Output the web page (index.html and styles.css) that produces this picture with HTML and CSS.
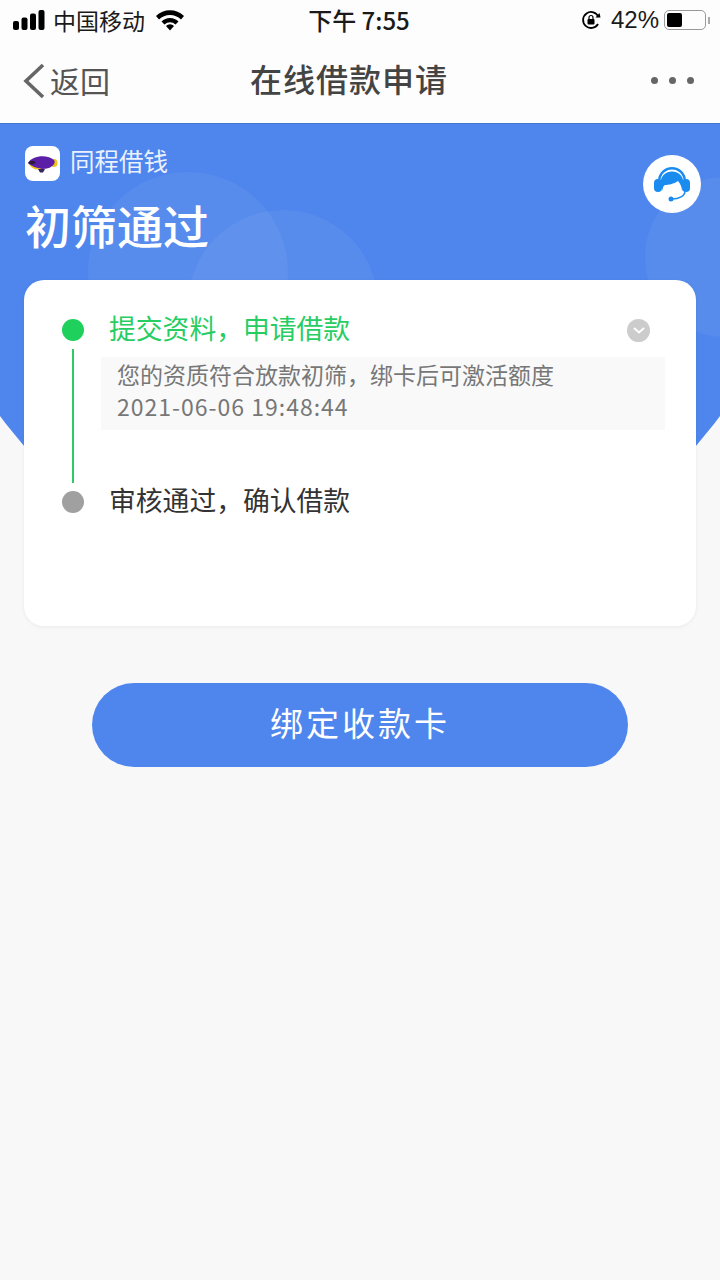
FILE: index.html
```html
<!DOCTYPE html>
<html lang="zh">
<head>
  <meta charset="UTF-8" />
  <meta name="viewport" content="width=device-width, initial-scale=1" />
  <title>在线借款申请</title>
  <link rel="stylesheet" href="styles.css">
</head>
<body>
  <!-- Status bar -->
  <div class="status-bar">
    <div class="status-left">
      <svg class="signal" width="34" height="20" viewBox="0 0 34 20">
        <rect x="1" y="11" width="6" height="9" rx="2"/>
        <rect x="9.500" y="7.500" width="6" height="12.500" rx="2"/>
        <rect x="18" y="3.500" width="6" height="16.500" rx="2"/>
        <rect x="26.500" y="0" width="6" height="20" rx="2"/>
      </svg>
      <span class="carrier">中国移动</span>
      <svg class="wifi" width="30" height="22" viewBox="0 0 30 22">
        <path d="M1 7 A20 20 0 0 1 29 7 L26 10.500 A15.500 15.500 0 0 0 4 10.500 Z"/>
        <path d="M6.500 12.500 A12 12 0 0 1 23.500 12.500 L20.500 15.500 A8 8 0 0 0 9.500 15.500 Z"/>
        <path d="M11 17 A5.500 5.500 0 0 1 19 17 L15 21.500 Z"/>
      </svg>
    </div>
    <div class="status-time">下午 7:55</div>
    <div class="status-right">
      <svg class="lock" width="20" height="20" viewBox="0 0 20 20">
        <path d="M17.500 7 A8 8 0 1 0 17 14" fill="none" stroke="#000" stroke-width="1.800"/>
        <path d="M14.500 7.500 L19.500 7.500 L18.500 3 Z"/>
        <rect x="6.500" y="9" width="7" height="5.500" rx="1"/>
        <path d="M8 9 V7.500 A2 2 0 0 1 12 7.500 V9" fill="none" stroke="#000" stroke-width="1.200"/>
      </svg>
      <span class="battery-pct">42%</span>
      <div class="battery"><div class="battery-fill"></div></div>
      <div class="battery-cap"></div>
    </div>
  </div>

  <!-- Nav -->
  <div class="nav">
    <div class="nav-back">
      <svg width="24" height="38" viewBox="0 0 24 38">
        <path d="M21 3 L4 19 L21 35" fill="none" stroke="#666" stroke-width="3.600"/>
      </svg>
      <span>返回</span>
    </div>
    <div class="nav-title">在线借款申请</div>
    <div class="nav-more"><i></i><i></i><i></i></div>
  </div>

  <!-- Blue header -->
  <div class="hero">
    <div class="bubble bubble-a"></div>
    <div class="bubble bubble-b"></div>
    <div class="bubble bubble-c"></div>
    <div class="hero-top">
      <div class="hero-text">
        <div class="brand">
          <div class="brand-logo">
            <svg width="31" height="20" viewBox="0 0 31 20">
              <ellipse cx="27" cy="9" rx="3.500" ry="4" fill="#f2c21a"/>
              <path d="M1 9 C5 1 21 0 27 6 C29 9 26 12 22 14 C14 16 6 15 1 9 Z" fill="#5b1ea6"/>
              <path d="M1 9 C4 6 7 6 9 9 L5 10.500 Z" fill="#2a1a3c"/>
              <path d="M2 10 C5 12 9 14 15 15 C9 16.500 4 14.500 2 10 Z" fill="#f2c21a"/>
              <path d="M11 15 H18 L16 18.500 H13 Z" fill="#3a2560"/>
            </svg>
          </div>
          <span>同程借钱</span>
        </div>
        <div class="hero-title">初筛通过</div>
      </div>
      <div class="service">
        <svg width="40" height="40" viewBox="0 0 40 40">
          <path d="M6 17 A14 14 0 0 1 34 17 L31.500 17 A11.500 11.500 0 0 0 8.500 17 Z" fill="#1a8cf0"/>
          <path d="M9 22 C7 13 13 7.500 20 7.500 C27 7.500 33 13 31 22 L30 27 C30 23 28.500 20 26 17 C22 20 16 21 13 21 C11 22 10.500 24 11 27 Z" fill="#1a8cf0"/>
          <rect x="2" y="15" width="8" height="13" rx="4" fill="#1a8cf0"/>
          <rect x="30" y="15" width="8" height="13" rx="4" fill="#1a8cf0"/>
          <path d="M33 27 C33 32 27 35 20 35" fill="none" stroke="#1a8cf0" stroke-width="1.500"/>
          <circle cx="19" cy="35" r="2.500" fill="#1a8cf0"/>
        </svg>
      </div>
    </div>
  </div>

  <!-- Card -->
  <div class="card">
    <div class="step step-done">
      <div class="step-mark"><span class="dot"></span><span class="line"></span></div>
      <div class="step-body">
        <div class="step-head">
          <span class="step-name">提交资料，申请借款</span>
          <span class="chevron">
            <svg width="14" height="9" viewBox="0 0 14 9"><path d="M2 2 L7 6.500 L12 2" fill="none" stroke="#fff" stroke-width="2"/></svg>
          </span>
        </div>
        <div class="step-detail">
          <div>您的资质符合放款初筛，绑卡后可激活额度</div>
          <div class="step-date">2021-06-06 19:48:44</div>
        </div>
      </div>
    </div>
    <div class="step">
      <div class="step-mark"><span class="dot"></span></div>
      <div class="step-body">
        <div class="step-head"><span class="step-name">审核通过，确认借款</span></div>
      </div>
    </div>
  </div>

  <div class="action"><button class="primary">绑定收款卡</button></div>
</body>
</html>
```

FILE: styles.css
```css
* {
  box-sizing: border-box;
}
html, body {
  margin: 0;
  padding: 0;
}
body {
  width: 720px;
  height: 1280px;
  overflow: hidden;
  background: #f8f8f8;
  font-family: "Noto Sans CJK SC", "Liberation Sans", sans-serif;
  color: #333;
}

/* Status bar */
.status-bar {
  height: 40px;
  background: #fdfdfd;
  display: flex;
  align-items: center;
  justify-content: space-between;
  padding: 0 10px 0 12px;
  position: relative;
  color: #1a1a1a;
  font-size: 23px;
}
.status-left, .status-right {
  display: flex;
  align-items: center;
}
.signal {
  fill: #000;
  margin-right: 7px;
}
.carrier {
  line-height: 40px;
}
.wifi {
  margin-left: 10px;
  fill: #000;
}
.status-time {
  position: absolute;
  left: 0;
  right: 2px;
  text-align: center;
  font-size: 24px;
  font-weight: 500;
  line-height: 40px;
  pointer-events: none;
}
.lock {
  margin-right: 10px;
}
.battery-pct {
  font-family: "Liberation Sans", sans-serif;
  font-size: 24px;
  margin-right: 5px;
}
.battery {
  width: 42px;
  height: 20px;
  border: 1.500px solid #999;
  border-radius: 5px;
  padding: 2px;
}
.battery-fill {
  width: 15px;
  height: 100%;
  background: #000;
  border-radius: 2px;
}
.battery-cap {
  width: 2px;
  height: 7px;
  background: #aaa;
  margin-left: 2px;
}

/* Nav */
.nav {
  height: 83px;
  background: #fdfdfd;
  display: flex;
  align-items: center;
  justify-content: space-between;
  padding: 0 26px 2px 22px;
  position: relative;
}
.nav-back {
  display: flex;
  align-items: center;
  gap: 4px;
  font-size: 30px;
  line-height: 40px;
  color: #555;
}
.nav-back span {
  margin-bottom: 2px;
}
.nav-title {
  position: absolute;
  top: 18px;
  left: 0;
  right: 22px;
  text-align: center;
  font-size: 32px;
  line-height: 40px;
  font-weight: 500;
  letter-spacing: 1px;
  color: #444;
  pointer-events: none;
}
.nav-more {
  display: flex;
  gap: 11px;
}
.nav-more i {
  width: 7px;
  height: 7px;
  border-radius: 50%;
  background: #666;
}

/* Blue header, a big ellipse cut off by the screen edges */
.hero {
  height: 400px;
  background: #4f86ed;
  border-top: 1px solid #4274d0;
  clip-path: ellipse(455px 479px at 50% 0);
  position: relative;
  overflow: hidden;
  padding: 22px 19px 0 25px;
}
.bubble {
  position: absolute;
  border-radius: 50%;
  background: rgba(255, 255, 255, 0.05);
}
.bubble-a {
  width: 200px;
  height: 200px;
  left: 88px;
  top: 48px;
}
.bubble-b {
  width: 190px;
  height: 190px;
  left: 188px;
  top: 86px;
}
.bubble-c {
  width: 160px;
  height: 160px;
  left: 645px;
  top: 53px;
}
.hero-top {
  display: flex;
  justify-content: space-between;
  align-items: flex-start;
  position: relative;
}
.brand {
  display: flex;
  align-items: center;
  gap: 10px;
  font-size: 24.500px;
  color: #eaf1fe;
}
.brand span {
  line-height: 29px;
  margin-bottom: 6px;
}
.brand-logo {
  width: 35px;
  height: 35px;
  border-radius: 8px;
  background: #fff;
  display: flex;
  align-items: center;
  justify-content: center;
}
.hero-title {
  font-size: 46px;
  line-height: 60px;
  font-weight: 500;
  color: #fff;
  margin-top: 13px;
}
.service {
  width: 58px;
  height: 58px;
  margin-top: 9px;
  border-radius: 50%;
  background: #fff;
  display: flex;
  align-items: center;
  justify-content: center;
}

/* Card */
.card {
  width: 672px;
  height: 346px;
  margin: -243px auto 0;
  background: #fff;
  border-radius: 20px;
  box-shadow: 0 1px 4px rgba(0, 0, 0, 0.06);
  position: relative;
  padding: 32px 31px 0 38px;
}
.step {
  display: flex;
}
.step-mark {
  width: 22px;
  margin-right: 25px;
  display: flex;
  flex-direction: column;
  align-items: center;
  padding-top: 7px;
  flex-shrink: 0;
}
.dot {
  width: 22px;
  height: 22px;
  border-radius: 50%;
  background: #a0a0a0;
  flex-shrink: 0;
}
.step-done .dot {
  background: #1fd05c;
}
.line {
  width: 2px;
  flex: 1;
  margin: 8px 0 1px;
  background: #2ccb63;
}
.step-body {
  flex: 1;
}
.step-head {
  display: flex;
  justify-content: space-between;
  align-items: center;
  height: 36px;
  padding-right: 15px;
}
.step-name {
  font-size: 26.800px;
  line-height: 30px;
  margin-bottom: 4px;
  color: #333;
}
.step-done .step-name {
  color: #27cd62;
}
.step-done {
  height: 172px;
}
.chevron {
  width: 23px;
  height: 23px;
  border-radius: 50%;
  background: #cccccc;
  display: flex;
  align-items: center;
  justify-content: center;
}
.step-detail {
  margin: 9px 0 0 -8px;
  height: 73px;
  padding: 1px 16px;
  background: #f9f9f9;
  font-size: 23px;
  line-height: 32px;
  color: #777;
}
.step-date {
  letter-spacing: 1px;
}

/* Button */
.action {
  display: flex;
  justify-content: center;
  margin-top: 57px;
}
.primary {
  width: 536px;
  height: 84px;
  padding: 0 0 6px;
  border: none;
  border-radius: 42px;
  background: #4f86ed;
  color: #fff;
  font-family: inherit;
  font-size: 33px;
  font-weight: 400;
  letter-spacing: 3px;
}
```
